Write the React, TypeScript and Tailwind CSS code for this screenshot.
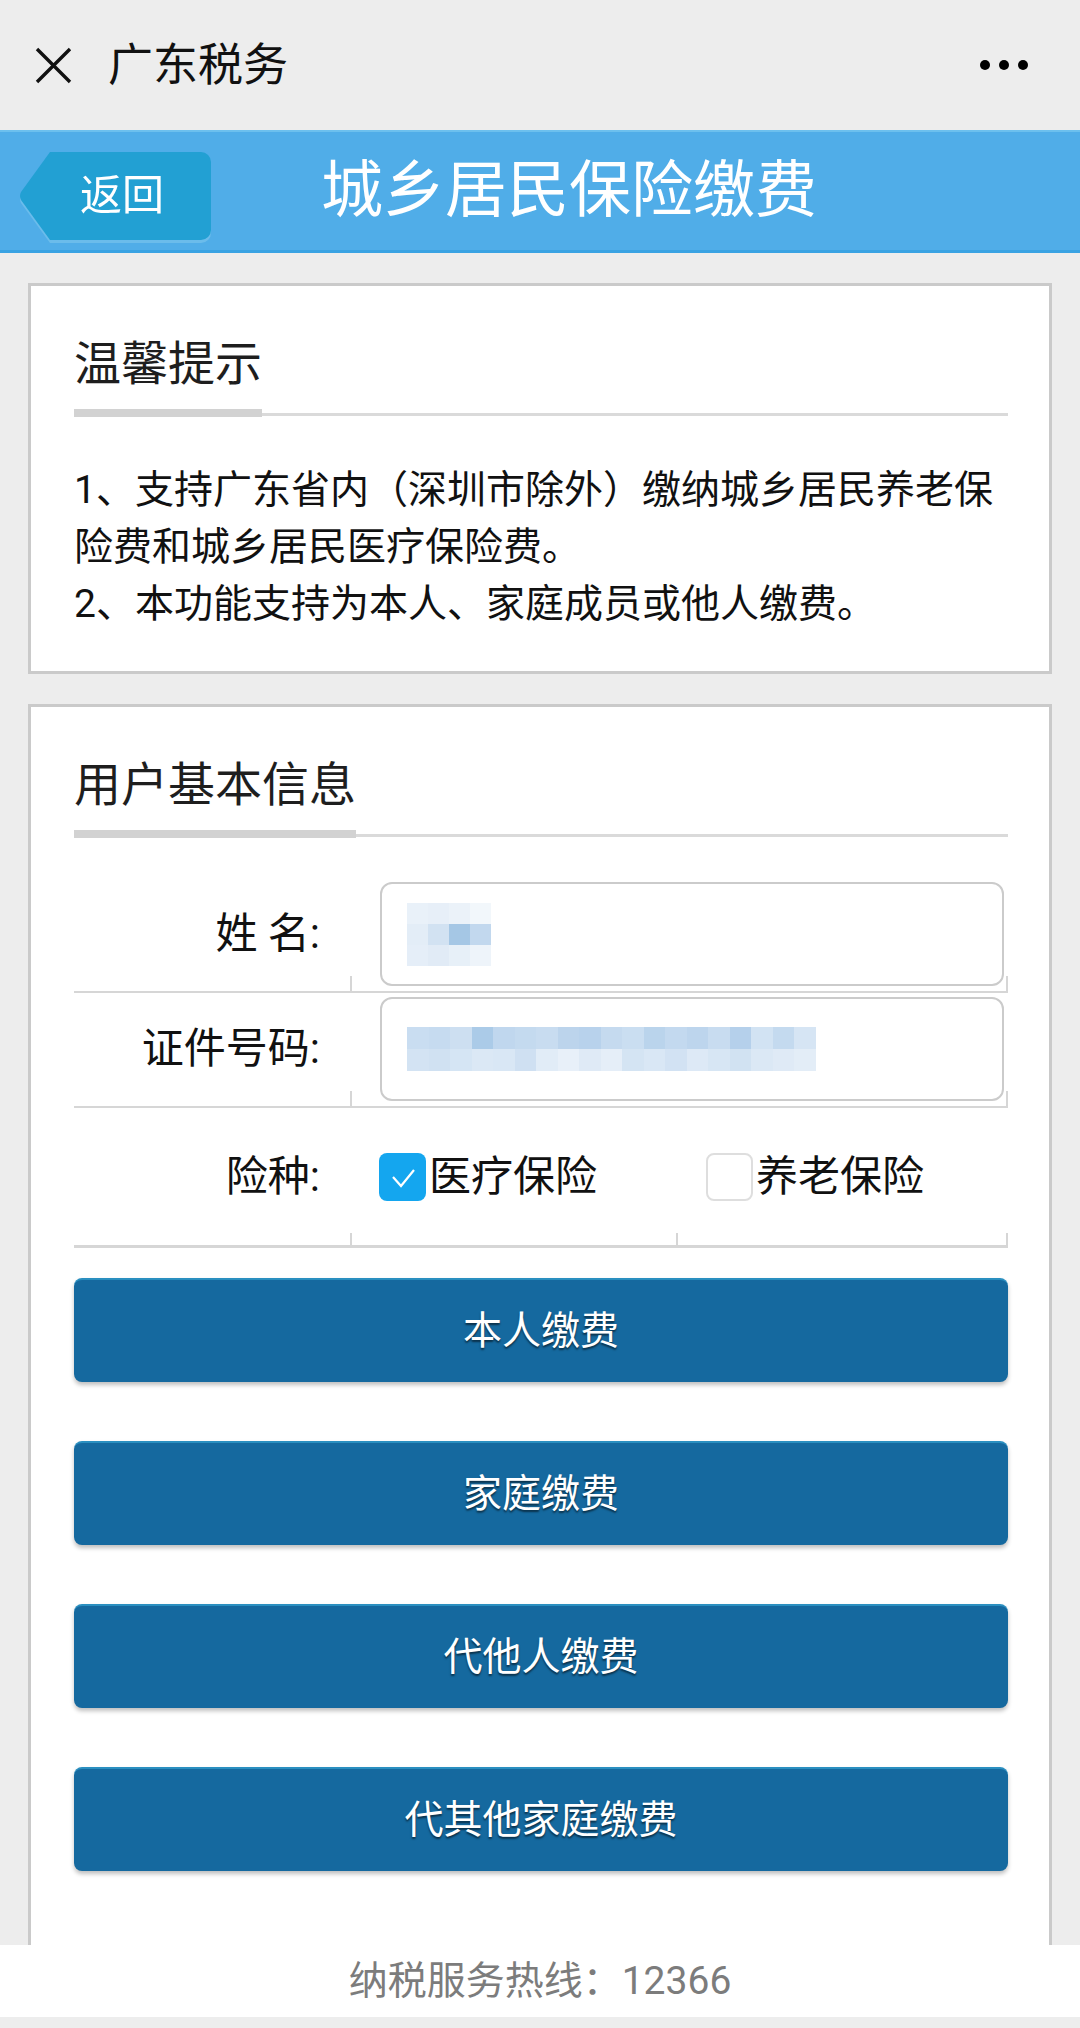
const nameBlocks = [
  ["bg-[#e9f1f9]", "bg-[#e7eff8]", "bg-[#ebf2f9]", "bg-[#f2f7fb]"],
  ["bg-[#e3edf7]", "bg-[#d2e2f2]", "bg-[#a5c7e5]", "bg-[#c2d8ee]"],
  ["bg-[#e5eef8]", "bg-[#e1ebf6]", "bg-[#e7f0f8]", "bg-[#eef4fa]"],
];

const idBlocks = [
  [
    "bg-[#c9ddf1]", "bg-[#c6dbf0]", "bg-[#cddff1]", "bg-[#abcbe8]", "bg-[#c0d7ee]",
    "bg-[#c4daef]", "bg-[#c8dcf0]", "bg-[#bcd4ec]", "bg-[#b8d2ec]", "bg-[#c5daef]",
    "bg-[#cadef1]", "bg-[#bad4ec]", "bg-[#c3d9ef]", "bg-[#bdd5ed]", "bg-[#c8dcf0]",
    "bg-[#b5d0eb]", "bg-[#d2e3f3]", "bg-[#c4daef]", "bg-[#d6e5f4]",
  ],
  [
    "bg-[#d3e3f3]", "bg-[#d0e1f2]", "bg-[#d5e5f4]", "bg-[#dbe8f5]", "bg-[#d9e7f5]",
    "bg-[#cfe0f2]", "bg-[#e1ecf7]", "bg-[#e8f0f9]", "bg-[#dfeaf6]", "bg-[#e5eef8]",
    "bg-[#d4e4f3]", "bg-[#d9e7f5]", "bg-[#d2e2f3]", "bg-[#dde9f6]", "bg-[#d7e6f4]",
    "bg-[#d1e2f2]", "bg-[#dbe8f5]", "bg-[#dfeaf6]", "bg-[#e3edf7]",
  ],
];

function SectionTitle({ text }: { text: string }) {
  return (
    <div className="flex items-end">
      <div className="flex flex-col">
        <h2 className="pt-[54px] pb-[22px] text-[47px] leading-none text-[#1e1e1e]">{text}</h2>
        <div className="h-[8px] bg-[#d2d2d2]" />
      </div>
      <div className="mb-[1px] h-[3px] flex-1 bg-[#dadada]" />
    </div>
  );
}

function Underline() {
  return (
    <div className="-mt-[10px] flex h-[17px]">
      <div className="w-[276px] border-b-[2px] border-[#d6d6d6]" />
      <div className="flex-1 border-x-[2px] border-b-[2px] border-[#d6d6d6]" />
    </div>
  );
}

function Check({ on, label }: { on?: boolean; label: string }) {
  return (
    <div className="flex items-center">
      {on ? (
        <div className="flex h-[48px] w-[47px] items-center justify-center rounded-[8px] bg-[#14a6ef]">
          <svg width="30" height="30" viewBox="0 0 30 30">
            <path d="M5 15 L13 24 L26 8" fill="none" stroke="white" strokeWidth="2.2" />
          </svg>
        </div>
      ) : (
        <div className="h-[48px] w-[47px] rounded-[8px] border-[2px] border-[#dedede] bg-white" />
      )}
      <span className="ml-[3px] text-[42px] leading-none text-[#111]">{label}</span>
    </div>
  );
}

const buttons = ["本人缴费", "家庭缴费", "代他人缴费", "代其他家庭缴费"];

export default function App() {
  return (
    <div className="flex h-[2028px] w-[1080px] flex-col overflow-hidden bg-[#ededed] font-['Roboto','Noto_Sans_CJK_SC',sans-serif]">
      {/* top bar */}
      <div className="flex h-[130px] items-center pl-[35px] pr-[52px]">
        <svg width="37" height="37" viewBox="0 0 37 37">
          <path d="M2 2 L35 35 M35 2 L2 35" stroke="#111" strokeWidth="3.4" />
        </svg>
        <span className="ml-[36px] text-[45px] leading-none text-[#111]">广东税务</span>
        <div className="ml-auto flex gap-[9px]">
          <div className="h-[10px] w-[10px] rounded-full bg-black" />
          <div className="h-[10px] w-[10px] rounded-full bg-black" />
          <div className="h-[10px] w-[10px] rounded-full bg-black" />
        </div>
      </div>

      {/* blue header */}
      <div className="flex h-[123px] items-center border-t-[2px] border-b-[3px] border-t-[#6cc0ee] border-b-[#3aa3e3] bg-[#50ade8] pl-[18px]">
        <div className="mt-[10px] flex h-[88px] items-stretch drop-shadow-[0_3px_0_rgba(110,190,235,0.9)]">
          <svg width="32" height="88" viewBox="0 0 32 88">
            <path d="M32 0 L3 40 Q1 44 3 48 L32 88 Z" fill="#22a0d3" />
          </svg>
          <div className="flex w-[161px] items-center rounded-r-[10px] bg-[#22a0d3] pl-[30px]">
            <span className="text-[42px] leading-none text-white">返回</span>
          </div>
        </div>
        <h1 className="ml-[110px] text-[62px] leading-none text-white">城乡居民保险缴费</h1>
      </div>

      {/* content */}
      <div className="flex flex-1 flex-col overflow-hidden px-[28px] pt-[30px]">
        <div className="border-[3px] border-[#cacaca] bg-white pb-[38px] pl-[43px] pr-[41px]">
          <SectionTitle text="温馨提示" />
          <div className="mt-[45px] text-[39px] leading-[57px] text-[#111]">
            <p>1、支持广东省内（深圳市除外）缴纳城乡居民养老保险费和城乡居民医疗保险费。</p>
            <p>2、本功能支持为本人、家庭成员或他人缴费。</p>
          </div>
        </div>

        <div className="mt-[30px] h-[1400px] shrink-0 border-[3px] border-[#cacaca] bg-white pl-[43px] pr-[41px]">
          <SectionTitle text="用户基本信息" />

          <div className="mt-[44px] flex items-center">
            <div className="w-[276px] pr-[30px] text-right text-[42px] leading-none text-[#111]">姓 名:</div>
            <div className="ml-[30px] flex h-[104px] w-[624px] items-center rounded-[12px] border-[2px] border-[#cbcbcb] bg-white pl-[25px]">
              <div className="flex flex-col">
                {nameBlocks.map((row, i) => (
                  <div key={i} className="flex">
                    {row.map((c, j) => (
                      <div key={j} className={`h-[21px] w-[21px] ${c}`} />
                    ))}
                  </div>
                ))}
              </div>
            </div>
          </div>
          <Underline />

          <div className="mt-[4px] flex items-center">
            <div className="w-[276px] pr-[30px] text-right text-[42px] leading-none text-[#111]">证件号码:</div>
            <div className="ml-[30px] flex h-[104px] w-[624px] items-center rounded-[12px] border-[2px] border-[#cbcbcb] bg-white pl-[25px]">
              <div className="flex flex-col">
                {idBlocks.map((row, i) => (
                  <div key={i} className="flex">
                    {row.map((c, j) => (
                      <div key={j} className={`h-[22px] w-[21.5px] ${c}`} />
                    ))}
                  </div>
                ))}
              </div>
            </div>
          </div>
          <Underline />

          <div className="flex h-[125px] items-center pt-[13px]">
            <div className="w-[276px] pr-[30px] text-right text-[42px] leading-none text-[#111]">险种:</div>
            <div className="w-[326px] pl-[29px]">
              <Check on label="医疗保险" />
            </div>
            <div className="flex-1 pl-[30px]">
              <Check label="养老保险" />
            </div>
          </div>
          <div className="flex h-[15px]">
            <div className="w-[276px] border-b-[3px] border-[#d6d6d6]" />
            <div className="w-[326px] border-b-[3px] border-l-[2px] border-[#d6d6d6]" />
            <div className="flex-1 border-x-[2px] border-b-[3px] border-[#d6d6d6]" />
          </div>

          <div className="mt-[30px] flex flex-col gap-[59px]">
            {buttons.map((b) => (
              <button
                key={b}
                className="flex h-[104px] w-full items-center justify-center rounded-[8px] border-t-[2px] border-[#2a8fc0] bg-[#15699f] text-[39px] leading-none text-white shadow-[0_3px_4px_rgba(0,0,0,0.25)] [text-shadow:0_2px_2px_rgba(0,0,0,0.55)]"
              >
                {b}
              </button>
            ))}
          </div>
        </div>
      </div>

      {/* footer */}
      <div className="flex h-[72px] items-center justify-center bg-white">
        <span className="text-[39px] leading-none text-[#7c7c7c]">纳税服务热线：12366</span>
      </div>
      <div className="h-[11px]" />
    </div>
  );
}
